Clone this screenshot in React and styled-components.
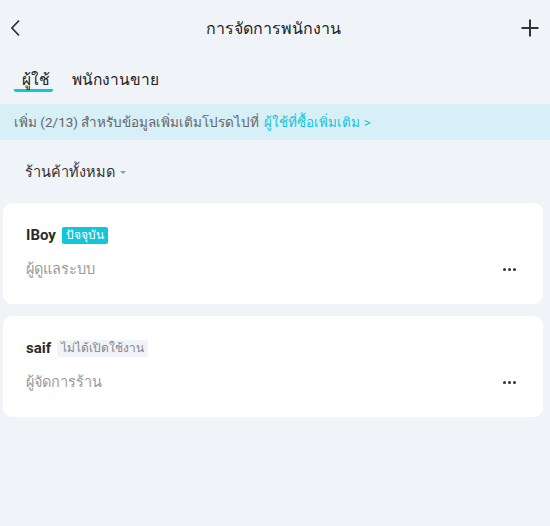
import React from "react";
import styled, { createGlobalStyle } from "styled-components";

const Global = createGlobalStyle`
  html, body { margin: 0; padding: 0; background: #f0f3f8; }
  body { font-family: Roboto, "Noto Sans", sans-serif; color: #333; }
  * { box-sizing: border-box; }
`;

const Page = styled.div`
  width: 550px;
  min-height: 526px;
  background: #f0f3f8;
  display: flex;
  flex-direction: column;
`;

const NavBar = styled.div`
  height: 56px;
  display: flex;
  align-items: center;
  justify-content: space-between;
  padding: 0 11px 0 6px;
`;

const IconButton = styled.div`
  width: 18px;
  height: 20px;
  display: flex;
  align-items: center;
  justify-content: center;
`;

const Title = styled.div`
  font-size: 16px;
  color: #222;
  margin-left: 2px;
`;

const Tabs = styled.div`
  display: flex;
  padding: 11px 0 0 14px;
  height: 48px;
`;

const Tab = styled.div`
  font-size: 15.5px;
  color: #222;
  padding: 0 ${(p) => (p.$first ? "3px" : "0")} 0 ${(p) => (p.$first ? "8px" : "19px")};
  height: 25px;
  display: flex;
  align-items: flex-start;
  border-bottom: 3px solid ${(p) => (p.$active ? "#13c5d9" : "transparent")};
  border-radius: 2px;
`;

const Banner = styled.div`
  background: #d7eff7;
  height: 36px;
  display: flex;
  align-items: center;
  padding: 0 14px;
  font-size: 13.5px;
  color: #666;
  white-space: nowrap;
`;

const Link = styled.span`
  color: #13c5d9;
  margin-left: 5px;
`;

const Filter = styled.div`
  display: flex;
  align-items: center;
  gap: 5px;
  height: 63px;
  padding: 0 0 0 25px;
  font-size: 14.5px;
  color: #333;
`;

const Caret = styled.span`
  width: 0;
  height: 0;
  border-left: 3.5px solid transparent;
  border-right: 3.5px solid transparent;
  border-top: 3.5px solid #999;
  margin-top: 2px;
`;

const List = styled.div`
  display: flex;
  flex-direction: column;
  gap: 12px;
  padding: 0 7px 0 3px;
`;

const Card = styled.div`
  background: #fff;
  border-radius: 9px;
  height: 101px;
  display: flex;
  align-items: stretch;
  justify-content: space-between;
  padding: 22px 27px 0 23px;
`;

const Info = styled.div`
  display: flex;
  flex-direction: column;
  gap: 12px;
`;

const NameRow = styled.div`
  display: flex;
  align-items: center;
  gap: 6px;
  height: 20px;
`;

const Name = styled.div`
  font-size: 15px;
  font-weight: 700;
  color: #2b2b2b;
`;

const Badge = styled.span`
  font-size: 12px;
  line-height: 16px;
  height: 17px;
  padding: 0 4px;
  border-radius: 2px;
  background: ${(p) => (p.$active ? "#13c5d9" : "#f0f3f8")};
  color: ${(p) => (p.$active ? "#fff" : "#888")};
`;

const Role = styled.div`
  font-size: 14.5px;
  color: #9a9a9a;
`;

const More = styled.div`
  align-self: flex-start;
  margin-top: 43px;
  display: flex;
  gap: 2px;
  & > span {
    width: 3px;
    height: 3px;
    border-radius: 50%;
    background: #333;
  }
`;

const Dots = () => (
  <More>
    <span />
    <span />
    <span />
  </More>
);

const users = [
  { name: "IBoy", badge: "ปัจจุบัน", active: true, role: "ผู้ดูแลระบบ" },
  { name: "saif", badge: "ไม่ได้เปิดใช้งาน", active: false, role: "ผู้จัดการร้าน" },
];

export default function App() {
  return (
    <Page>
      <Global />
      <NavBar>
        <IconButton>
          <svg width="12" height="18" viewBox="0 0 12 18" fill="none">
            <path d="M10 1.5 L3 9 L10 16.5" stroke="#333" strokeWidth="1.8" />
          </svg>
        </IconButton>
        <Title>การจัดการพนักงาน</Title>
        <IconButton>
          <svg width="18" height="18" viewBox="0 0 18 18" fill="none">
            <path d="M9 0.5 V17.5 M0.5 9 H17.5" stroke="#333" strokeWidth="2" />
          </svg>
        </IconButton>
      </NavBar>
      <Tabs>
        <Tab $first $active>ผู้ใช้</Tab>
        <Tab>พนักงานขาย</Tab>
      </Tabs>
      <Banner>
        เพิ่ม (2/13) สำหรับข้อมูลเพิ่มเติมโปรดไปที่<Link>ผู้ใช้ที่ซื้อเพิ่มเติม &gt;</Link>
      </Banner>
      <Filter>
        ร้านค้าทั้งหมด
        <Caret />
      </Filter>
      <List>
        {users.map((u) => (
          <Card key={u.name}>
            <Info>
              <NameRow>
                <Name>{u.name}</Name>
                <Badge $active={u.active}>{u.badge}</Badge>
              </NameRow>
              <Role>{u.role}</Role>
            </Info>
            <Dots />
          </Card>
        ))}
      </List>
    </Page>
  );
}
